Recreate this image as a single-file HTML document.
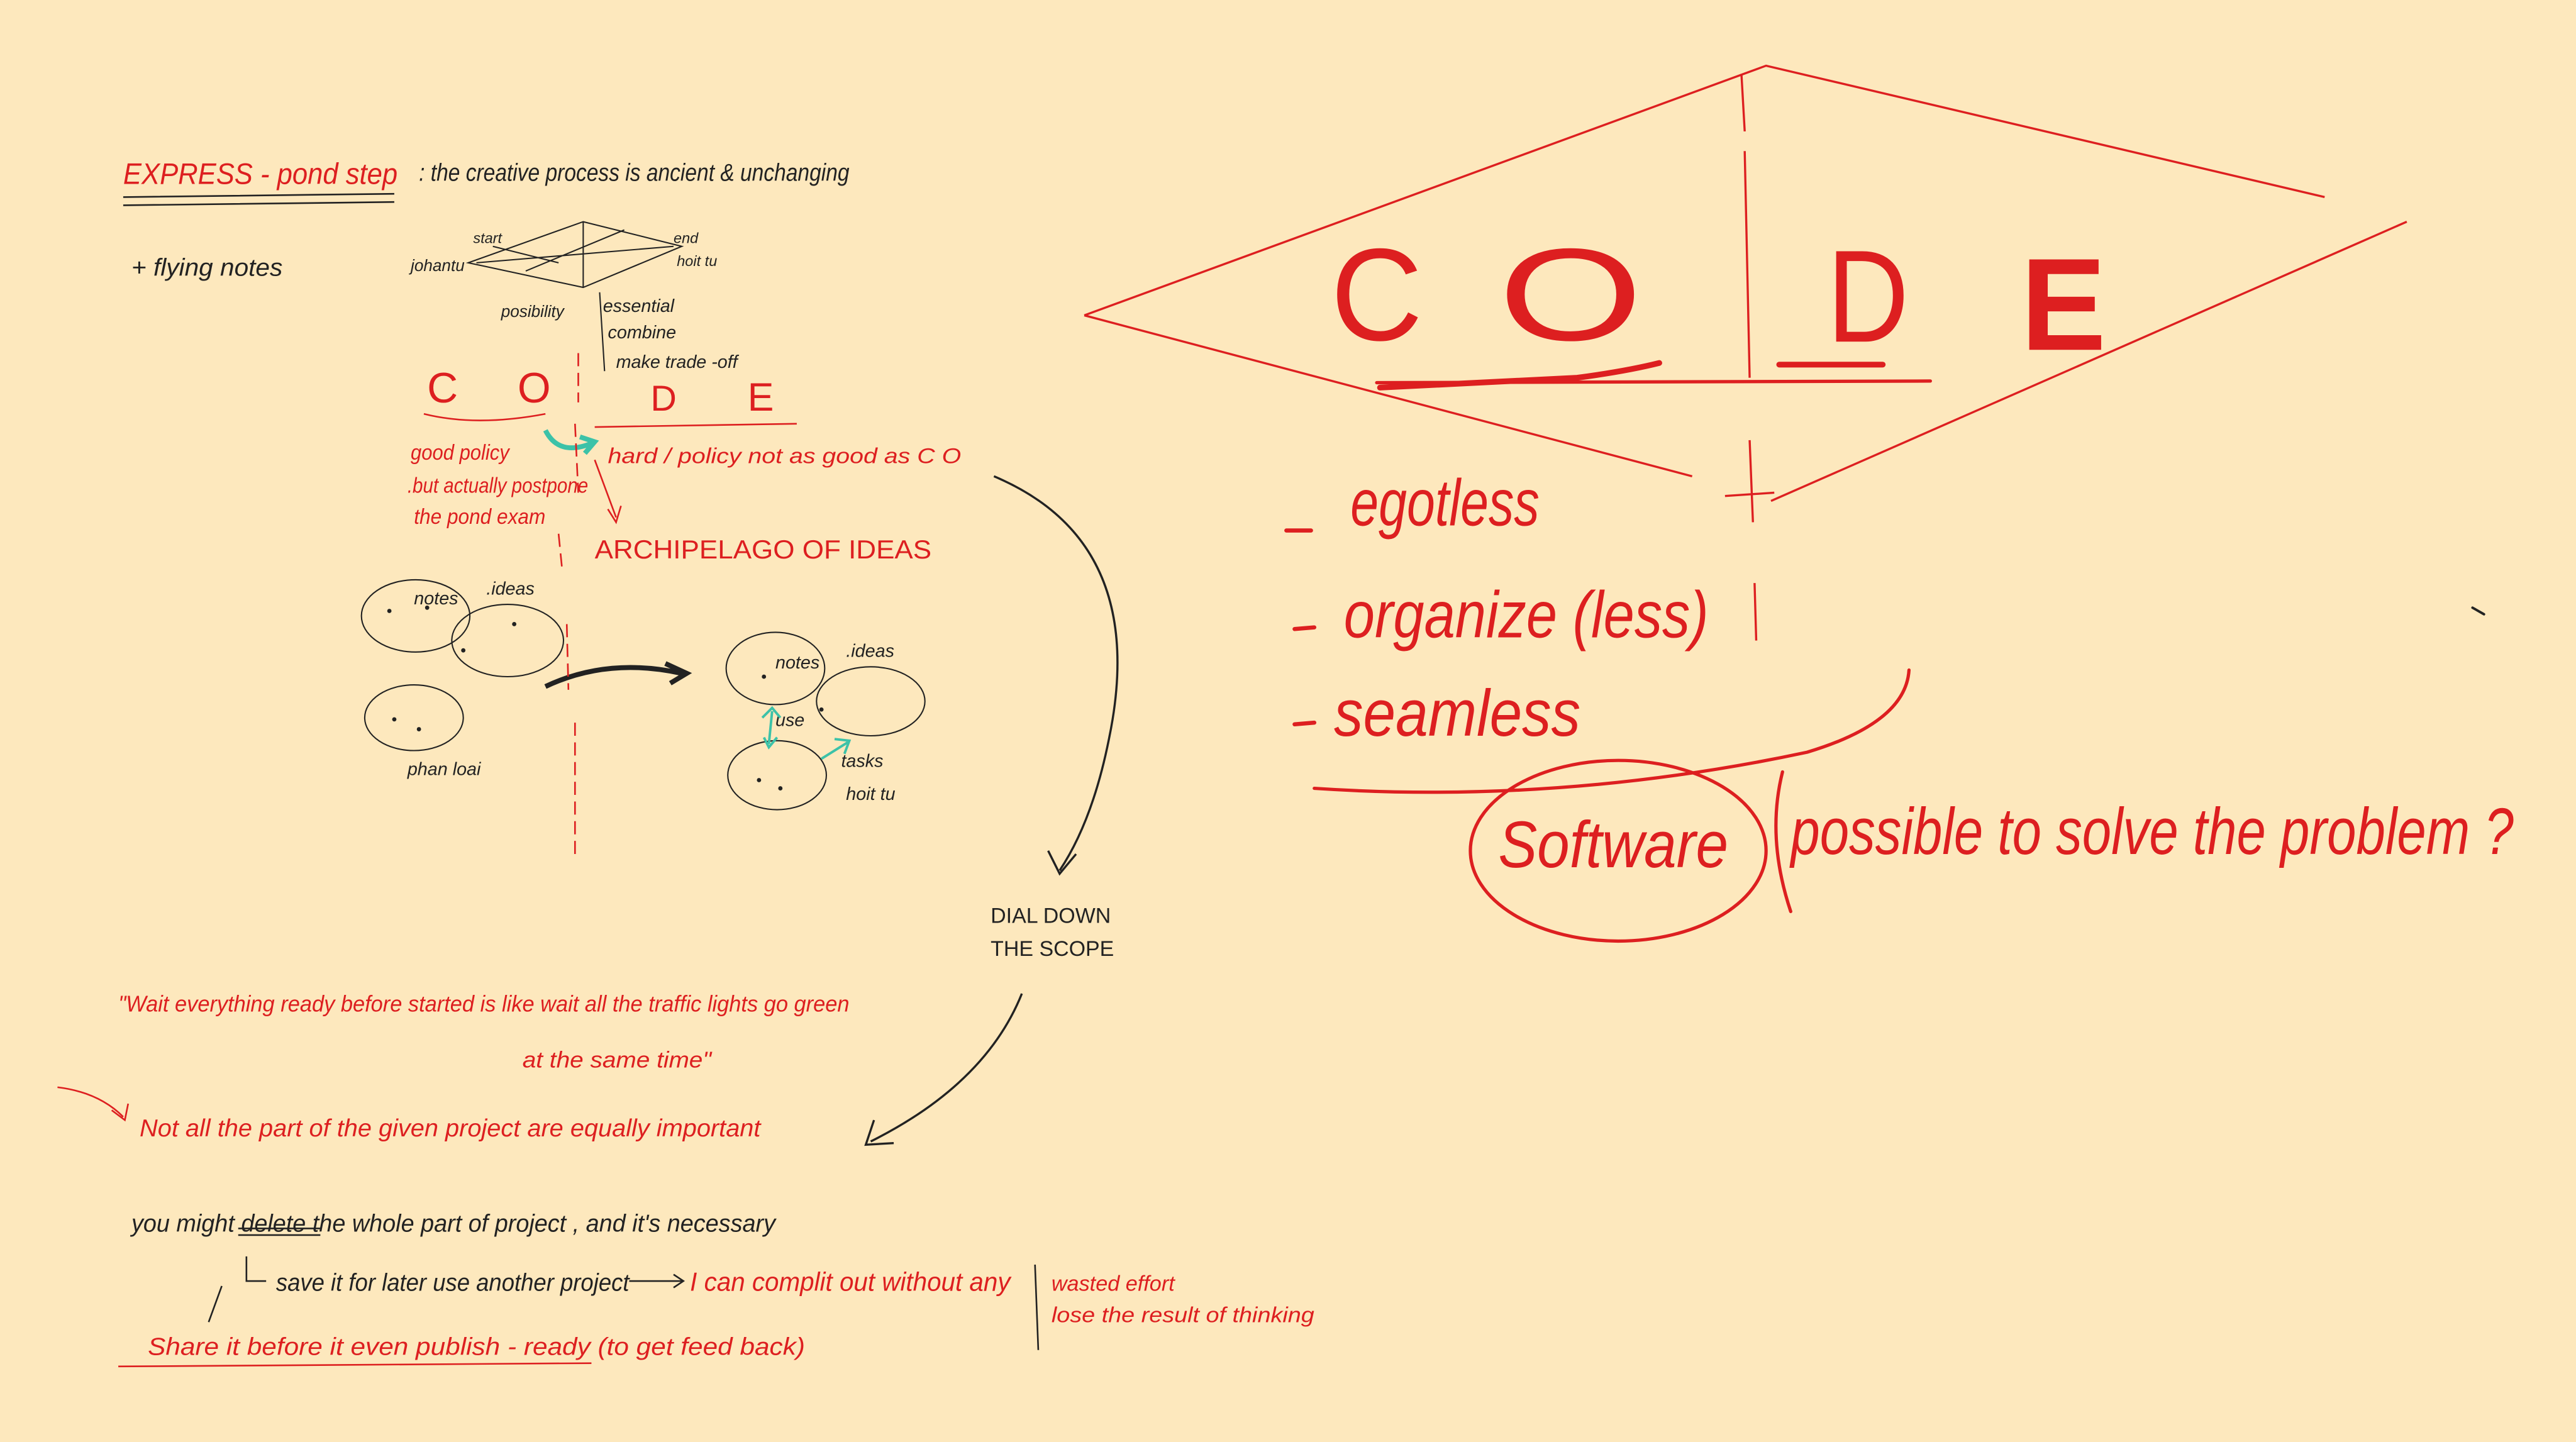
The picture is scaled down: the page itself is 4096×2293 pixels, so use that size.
<!DOCTYPE html>
<html><head><meta charset="utf-8">
<style>
html,body{margin:0;padding:0;background:#fde8bd;}
svg{display:block;width:4096px;height:2293px;}
text{font-family:"Liberation Sans",sans-serif;}
.r{fill:#dd1f20;}
.k{fill:#222;}
.h{font-family:"Liberation Sans Narrow","Liberation Sans",sans-serif;font-style:italic;}
</style></head>
<body>
<svg viewBox="0 0 1568 878" preserveAspectRatio="none" xmlns="http://www.w3.org/2000/svg">
<rect width="1568" height="878" fill="#fde8bd"/>
<g stroke="#dd1f20" fill="none" stroke-width="1.3">
<path d="M660 192 L1075 40 L1415 120"/>
<path d="M1465 135 L1078 305"/>
<path d="M660 192 L1030 290"/>
<path d="M1060 45 L1062 80 M1062 92 L1065 230 M1065 268 L1067 318 M1068 355 L1069 390"/>
<path d="M1050 302 L1080 300"/>
</g>
<g font-size="80">
<text x="810" y="207" class="r" textLength="56" lengthAdjust="spacingAndGlyphs">C</text>
<text x="912" y="207" class="r" textLength="88" lengthAdjust="spacingAndGlyphs">O</text>
<text x="1112" y="208" class="r" textLength="50" lengthAdjust="spacingAndGlyphs">D</text>
<text x="1230" y="213" class="r" font-weight="bold" textLength="52" lengthAdjust="spacingAndGlyphs">E</text>
</g>
<g stroke="#dd1f20" fill="none" stroke-linecap="round">
<path d="M840 236 Q920 232 960 230 Q990 226 1010 221" stroke-width="3.5"/>
<path d="M1083 222 L1146 222" stroke-width="3.5"/>
<path d="M838 233 L1175 232" stroke-width="2"/>
<path d="M783 323 L798 323 M788 383 L800 382 M788 441 L800 440" stroke-width="2.5"/>
<path d="M800 480 Q950 490 1100 458 Q1160 440 1162 408" stroke-width="2"/>
<ellipse cx="985" cy="518" rx="90" ry="55" stroke-width="2"/>
<path d="M1085 470 Q1075 510 1090 555" stroke-width="2"/>
<path d="M1505 370 L1512 374" stroke="#222" stroke-width="1.5"/>
</g>
<g class="r h" font-size="40">
<text x="822" y="320" textLength="115" lengthAdjust="spacingAndGlyphs">egotless</text>
<text x="818" y="388" textLength="222" lengthAdjust="spacingAndGlyphs">organize (less)</text>
<text x="812" y="448" textLength="150" lengthAdjust="spacingAndGlyphs">seamless</text>
<text x="912" y="528" textLength="140" lengthAdjust="spacingAndGlyphs">Software</text>
<text x="1090" y="520" textLength="440" lengthAdjust="spacingAndGlyphs">possible to solve the problem ?</text>
</g>

<g class="h" font-size="15">
<text x="75" y="112" class="r" font-size="18" textLength="167" lengthAdjust="spacingAndGlyphs">EXPRESS - pond step</text>
<text x="255" y="110" class="k" textLength="262" lengthAdjust="spacingAndGlyphs">: the creative process is ancient &amp; unchanging</text>
<text x="80" y="168" class="k" textLength="92" lengthAdjust="spacingAndGlyphs">+ flying notes</text>
<text x="250" y="165" class="k" font-size="10">johantu</text>
<text x="288" y="148" class="k" font-size="9">start</text>
<text x="410" y="148" class="k" font-size="9">end</text>
<text x="412" y="162" class="k" font-size="9">hoit tu</text>
<text x="305" y="193" class="k" font-size="10">posibility</text>
<text x="367" y="190" class="k" font-size="11">essential</text>
<text x="370" y="206" class="k" font-size="11">combine</text>
<text x="375" y="224" class="k" font-size="11">make trade -off</text>
</g>
<g stroke="#222" fill="none" stroke-width="0.8">
<path d="M285 160 L355 135 L415 150 L355 175 Z M290 160 L410 150 M355 135 L355 175 M300 150 L340 160 M320 165 L380 140"/>
<path d="M365 178 L368 226"/>
<ellipse cx="253" cy="375" rx="33" ry="22"/>
<ellipse cx="309" cy="390" rx="34" ry="22"/>
<ellipse cx="252" cy="437" rx="30" ry="20"/>
<ellipse cx="472" cy="407" rx="30" ry="22"/>
<ellipse cx="530" cy="427" rx="33" ry="21"/>
<ellipse cx="473" cy="472" rx="30" ry="21"/>
<path d="M605 290 Q700 330 675 450 Q665 500 645 530 M638 518 L645 532 L655 520" stroke-width="1.3"/>
<path d="M622 605 Q600 660 530 695 M532 682 L527 697 L544 696" stroke-width="1.3"/>
<path d="M332 418 Q370 400 415 410 M405 404 L418 410 L408 416" stroke-width="3"/>
<path d="M150 765 L150 780 L162 780 M383 780 L415 780 M410 776 L416 780 L410 784 M135 783 L127 805" stroke-width="1"/>
<path d="M630 770 L632 822" stroke-width="1"/>
<path d="M145 748 L195 748 M145 752 L195 752" stroke-width="1"/>
</g>
<g fill="#222"><circle cx="260" cy="370" r="1.3"/><circle cx="313" cy="380" r="1.3"/><circle cx="282" cy="396" r="1.3"/><circle cx="240" cy="438" r="1.3"/><circle cx="255" cy="444" r="1.3"/><circle cx="465" cy="412" r="1.3"/><circle cx="500" cy="432" r="1.3"/><circle cx="462" cy="475" r="1.3"/><circle cx="475" cy="480" r="1.3"/><circle cx="237" cy="372" r="1.3"/></g>
<g class="k h" font-size="11">
<text x="252" y="368">notes</text><text x="296" y="362">.ideas</text>
<text x="248" y="472">phan loai</text>
<text x="472" y="407">notes</text><text x="515" y="400">.ideas</text>
<text x="472" y="442">use</text>
<text x="512" y="467">tasks</text><text x="515" y="487">hoit tu</text>
</g>
<g stroke="#3cc2a8" fill="none" stroke-width="1.5">
<path d="M470 433 L468 453 M464 437 L470 431 L475 437 M465 449 L468 455 L473 449"/>
<path d="M516 452 L500 462 M508 450 L517 451 L514 459"/>
<path d="M332 262 Q340 278 360 270 M353 266 L362 269 L356 276" stroke-width="3"/>
</g>
<g class="r" font-size="26">
<text x="260" y="245">C</text><text x="315" y="245">O</text>
<text x="396" y="250" font-size="22">D</text><text x="455" y="250" font-size="24">E</text>
</g>
<g stroke="#dd1f20" fill="none" stroke-width="1">
<path d="M75 120 L240 118 M75 125 L240 123" stroke="#222"/>
<path d="M352 215 L352 245 M350 258 L352 300 M340 325 L342 345 M345 380 L346 420 M350 440 L350 520" stroke-dasharray="8 4"/>
<path d="M258 252 Q290 260 332 252 M362 260 L485 258"/>
<path d="M362 280 L375 315 M370 310 L375 318 L378 308"/>
<path d="M35 662 Q60 665 75 680 M68 676 L76 682 L78 672"/>
<path d="M72 832 L360 830"/>
</g>
<g class="r h" font-size="13">
<text x="250" y="280" textLength="60" lengthAdjust="spacingAndGlyphs">good policy</text>
<text x="248" y="300" textLength="110" lengthAdjust="spacingAndGlyphs">.but actually postpone</text>
<text x="252" y="319" textLength="80" lengthAdjust="spacingAndGlyphs">the pond exam</text>
<text x="370" y="282" textLength="215" lengthAdjust="spacingAndGlyphs">hard / policy not as good as  C O</text>
<text x="362" y="340" font-size="16" style="font-style:normal" textLength="205" lengthAdjust="spacingAndGlyphs">ARCHIPELAGO OF IDEAS</text>
<text x="72" y="616" font-size="14" textLength="445" lengthAdjust="spacingAndGlyphs">"Wait everything ready before started is like wait all the traffic lights go green</text>
<text x="318" y="650" font-size="14" textLength="115" lengthAdjust="spacingAndGlyphs">at the same time"</text>
<text x="85" y="692" font-size="15" textLength="378" lengthAdjust="spacingAndGlyphs">Not all the part of the given project are equally important</text>
<text x="420" y="786" font-size="16" textLength="195" lengthAdjust="spacingAndGlyphs">I can complit out without any</text>
<text x="640" y="786" font-size="13" textLength="75" lengthAdjust="spacingAndGlyphs">wasted effort</text>
<text x="640" y="805" font-size="13" textLength="160" lengthAdjust="spacingAndGlyphs">lose the result of thinking</text>
<text x="90" y="825" font-size="15" textLength="400" lengthAdjust="spacingAndGlyphs">Share it before it even publish - ready (to get feed back)</text>
</g>
<g class="k h" font-size="15">
<text x="80" y="750" textLength="392" lengthAdjust="spacingAndGlyphs">you might delete the whole part of project , and it's necessary</text>
<text x="168" y="786" textLength="215" lengthAdjust="spacingAndGlyphs">save it for later use another project</text>
<text x="603" y="562" font-size="13" style="font-style:normal">DIAL DOWN</text>
<text x="603" y="582" font-size="13" style="font-style:normal">THE SCOPE</text>
</g>
</svg>
</body></html>
